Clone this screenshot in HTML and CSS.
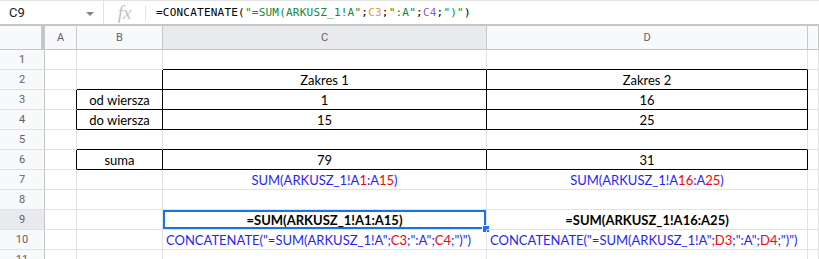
FILE: index.html
```html
<!DOCTYPE html>
<html lang="pl">
<head>
  <meta charset="UTF-8" />
  <title>Arkusz</title>
  <link rel="stylesheet" href="styles.css">
</head>
<body>

  <!-- formula bar -->
  <div class="formula-bar">
    <div class="name-box">
      <span class="cell-ref">C9</span>
      <span class="drop"></span>
    </div>
    <div class="fx">fx</div>
    <div class="formula">=CONCATENATE(<span class="str">"=SUM(ARKUSZ_1!A"</span>;<span class="ref1">C3</span>;<span class="str">":A"</span>;<span class="ref2">C4</span>;<span class="str">")"</span>)</div>
  </div>

  <!-- sheet -->
  <div class="sheet">
    <div class="hd corner"></div>
    <div class="hd">A</div>
    <div class="hd">B</div>
    <div class="hd sel">C</div>
    <div class="hd">D</div>
    <div class="hd"></div>

    <div class="rh">1</div>
    <div class="c"></div>
    <div class="c"></div>
    <div class="c bb"></div>
    <div class="c bb"></div>
    <div class="c"></div>

    <div class="rh">2</div>
    <div class="c"></div>
    <div class="c br bb"></div>
    <div class="c bb br mid">Zakres 1</div>
    <div class="c bb br mid">Zakres 2</div>
    <div class="c"></div>

    <div class="rh">3</div>
    <div class="c br"></div>
    <div class="c bb br mid">od wiersza</div>
    <div class="c bb br mid">1</div>
    <div class="c bb br mid">16</div>
    <div class="c"></div>

    <div class="rh">4</div>
    <div class="c br"></div>
    <div class="c bb br mid">do wiersza</div>
    <div class="c bb br mid">15</div>
    <div class="c bb br mid">25</div>
    <div class="c"></div>

    <div class="rh">5</div>
    <div class="c"></div>
    <div class="c bb"></div>
    <div class="c bb"></div>
    <div class="c bb"></div>
    <div class="c"></div>

    <div class="rh">6</div>
    <div class="c br"></div>
    <div class="c bb br mid">suma</div>
    <div class="c bb br mid">79</div>
    <div class="c bb br mid">31</div>
    <div class="c"></div>

    <div class="rh">7</div>
    <div class="c"></div>
    <div class="c"></div>
    <div class="c mid blue">SUM(ARKUSZ_1!A<span class="red">1</span>:A<span class="red">15</span>)</div>
    <div class="c mid blue">SUM(ARKUSZ_1!A<span class="red">16</span>:A<span class="red">25</span>)</div>
    <div class="c"></div>

    <div class="rh">8</div>
    <div class="c"></div>
    <div class="c"></div>
    <div class="c"></div>
    <div class="c"></div>
    <div class="c"></div>

    <div class="rh sel">9</div>
    <div class="c"></div>
    <div class="c"></div>
    <div class="c mid bold active">=SUM(ARKUSZ_1!A1:A15)</div>
    <div class="c mid bold">=SUM(ARKUSZ_1!A16:A25)</div>
    <div class="c"></div>

    <div class="rh">10</div>
    <div class="c"></div>
    <div class="c"></div>
    <div class="c blue">CONCATENATE("=SUM(ARKUSZ_1!A";<span class="red">C3</span>;":A";<span class="red">C4</span>;")")</div>
    <div class="c blue">CONCATENATE("=SUM(ARKUSZ_1!A";<span class="red">D3</span>;":A";<span class="red">D4</span>;")")</div>
    <div class="c"></div>

    <div class="rh">11</div>
    <div class="c"></div>
    <div class="c"></div>
    <div class="c"></div>
    <div class="c"></div>
    <div class="c"></div>
  </div>

</body>
</html>
```

FILE: styles.css
```css
* {
  box-sizing: border-box;
}

body {
  margin: 0;
  background-color: white;
  font-family: Roboto, Arial, sans-serif;
  overflow: hidden;
}

/* formula bar */
.formula-bar {
  height: 26px;
  display: flex;
  align-items: center;
  border-top: 1px solid #e1e3e1;
  border-bottom: 2px solid #c4c7c5;
}

.name-box {
  width: 104px;
  height: 100%;
  display: flex;
  align-items: center;
  justify-content: space-between;
  padding: 0 9px 0 9px;
  border-right: 1px solid #e1e3e1;
}

.cell-ref {
  font-size: 13px;
  color: #202124;
}

.drop {
  width: 0;
  height: 0;
  border-left: 4px solid transparent;
  border-right: 4px solid transparent;
  border-top: 4px solid #80868b;
  margin-top: 2px;
}

.fx {
  width: 42px;
  height: 16px;
  line-height: 16px;
  text-align: center;
  font-family: "Liberation Serif", serif;
  font-style: italic;
  font-size: 19px;
  color: #bdc1c6;
  border-right: 1px solid #e1e3e1;
}

.formula {
  padding-left: 10px;
  font-family: "DejaVu Sans Mono", monospace;
  font-size: 11px;
  letter-spacing: 0.22px;
  color: #000;
}

.str {
  color: #0f8a3a;
}

.ref1 {
  color: #f09a36;
}

.ref2 {
  color: #8c5fd0;
}

/* sheet grid */
.sheet {
  display: grid;
  grid-template-columns: 45px 32px 86px 324px 321px 1fr;
  grid-template-rows: 24px repeat(11, 20px);
}

.hd {
  background-color: #f8f9fa;
  border-right: 1px solid #c4c7c5;
  border-bottom: 1px solid #c4c7c5;
  color: #5f6368;
  font-size: 11px;
  display: flex;
  align-items: center;
  justify-content: center;
}

.hd.corner {
  border-right: 4px solid #c4c7c5;
}

.hd.sel,
.rh.sel {
  background-color: #e8eaed;
}

.rh {
  background-color: #f8f9fa;
  border-right: 1px solid #c4c7c5;
  border-bottom: 1px solid #e1e3e1;
  color: #5f6368;
  font-size: 11px;
  display: flex;
  align-items: center;
  justify-content: center;
}

.c {
  border-right: 1px solid #e2e2e2;
  border-bottom: 1px solid #e2e2e2;
  font-family: Lato, "Liberation Sans", sans-serif;
  font-size: 13px;
  color: #000;
  white-space: nowrap;
  display: flex;
  align-items: center;
  padding: 0 3px;
  overflow: visible;
  position: relative;
}

.c.mid {
  justify-content: center;
}

.c.bb {
  border-bottom-color: #000;
}

.c.br {
  border-right-color: #000;
}

.bold {
  font-weight: bold;
}

.blue {
  color: #1f1fff;
}

.red {
  color: #ff0000;
}

/* active cell */
.active {
  box-shadow: inset 0 0 0 2px #1a73e8;
}

.active::after {
  content: "";
  position: absolute;
  right: -4px;
  bottom: -4px;
  width: 6px;
  height: 6px;
  background-color: #1a73e8;
  border: 1px solid white;
}
```
